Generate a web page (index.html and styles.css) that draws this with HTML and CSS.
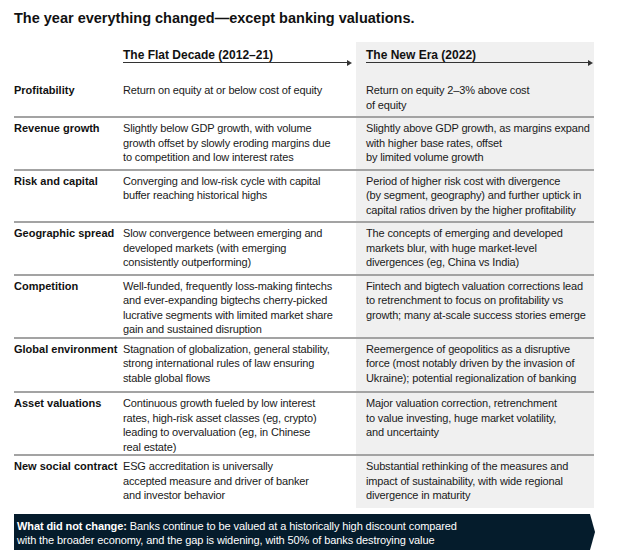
FILE: index.html
```html
<!DOCTYPE html>
<html lang="en">
<head>
<meta charset="utf-8">
<title>The year everything changed</title>
<link rel="stylesheet" href="styles.css">
</head>
<body>
<div class="page">
  <h1 class="title">The year everything changed—except banking valuations.</h1>
  <div class="table">
    <div class="cell head-blank"></div>
    <div class="cell head flat">
      <div class="head-text">The Flat Decade (2012–21)</div>
      <div class="arrow"><span class="arrow-line"></span><svg class="arrow-tip" width="5" height="6" viewBox="0 0 5 6"><path d="M0 0 L5 3 L0 6 Z"/></svg></div>
    </div>
    <div class="cell head new">
      <div class="head-text">The New Era (2022)</div>
      <div class="arrow"><span class="arrow-line"></span><svg class="arrow-tip" width="5" height="6" viewBox="0 0 5 6"><path d="M0 0 L5 3 L0 6 Z"/></svg></div>
    </div>

    <div class="cell label short">Profitability</div>
    <div class="cell flat short">Return on equity at or below cost of equity</div>
    <div class="cell new short">Return on equity 2–3% above cost<br>of equity</div>

    <div class="cell label">Revenue growth</div>
    <div class="cell flat">Slightly below GDP growth, with volume<br>growth offset by slowly eroding margins due<br>to competition and low interest rates</div>
    <div class="cell new">Slightly above GDP growth, as margins expand<br>with higher base rates, offset<br>by limited volume growth</div>

    <div class="cell label">Risk and capital</div>
    <div class="cell flat">Converging and low-risk cycle with capital<br>buffer reaching historical highs</div>
    <div class="cell new">Period of higher risk cost with divergence<br>(by segment, geography) and further uptick in<br>capital ratios driven by the higher profitability</div>

    <div class="cell label">Geographic spread</div>
    <div class="cell flat">Slow convergence between emerging and<br>developed markets (with emerging<br>consistently outperforming)</div>
    <div class="cell new">The concepts of emerging and developed<br>markets blur, with huge market-level<br>divergences (eg, China vs India)</div>

    <div class="cell label">Competition</div>
    <div class="cell flat">Well-funded, frequently loss-making fintechs<br>and ever-expanding bigtechs cherry-picked<br>lucrative segments with limited market share<br>gain and sustained disruption</div>
    <div class="cell new">Fintech and bigtech valuation corrections lead<br>to retrenchment to focus on profitability vs<br>growth; many at-scale success stories emerge</div>

    <div class="cell label roomy">Global environment</div>
    <div class="cell flat roomy">Stagnation of globalization, general stability,<br>strong international rules of law ensuring<br>stable global flows</div>
    <div class="cell new roomy">Reemergence of geopolitics as a disruptive<br>force (most notably driven by the invasion of<br>Ukraine); potential regionalization of banking</div>

    <div class="cell label">Asset valuations</div>
    <div class="cell flat">Continuous growth fueled by low interest<br>rates, high-risk asset classes (eg, crypto)<br>leading to overvaluation (eg, in Chinese<br>real estate)</div>
    <div class="cell new">Major valuation correction, retrenchment<br>to value investing, huge market volatility,<br>and uncertainty</div>

    <div class="cell label last">New social contract</div>
    <div class="cell flat last">ESG accreditation is universally<br>accepted measure and driver of banker<br>and investor behavior</div>
    <div class="cell new last">Substantial rethinking of the measures and<br>impact of sustainability, with wide regional<br>divergence in maturity</div>
  </div>
  <div class="note"><strong>What did not change:</strong> Banks continue to be valued at a historically high discount compared<br>with the broader economy, and the gap is widening, with 50% of banks destroying value</div>
</div>
</body>
</html>
```

FILE: styles.css
```css
*, *::before, *::after {
  box-sizing: border-box;
}

html, body {
  margin: 0;
  padding: 0;
  background: #ffffff;
}

body {
  font-family: "Liberation Sans", Arial, sans-serif;
  color: #1a1a1a;
}

.page {
  padding: 8px 0 0 14px;
  width: 596px;
}

.title {
  margin: 0;
  font-size: 14.5px;
  line-height: 20px;
  font-weight: 700;
  color: #111;
}

.table {
  margin-top: 14px;
  display: grid;
  grid-template-columns: 109px 233px 238px;
  font-size: 11px;
  line-height: 14.5px;
  letter-spacing: -0.15px;
}

.cell {
  padding: 3px 0 0 0;
  border-bottom: 2px solid #a3a3a3;
  min-height: 52.5px;
  white-space: nowrap;
}

.cell.short {
  min-height: 38px;
}

.cell.roomy {
  min-height: 54.5px;
}

.cell.last {
  border-bottom: none;
  min-height: 52px;
}

.label {
  font-weight: 700;
  color: #111;
  letter-spacing: 0;
}

.new {
  background: #f0f0f0;
  padding-left: 10px;
}

.head,
.head-blank {
  border-bottom: none;
  padding: 6px 0 0 0;
  min-height: 38px;
  letter-spacing: 0;
}

.head.new {
  padding-left: 10px;
  padding-right: 1px;
}

.head.flat {
  padding-right: 4px;
}

.head-text {
  font-size: 12px;
  line-height: 14px;
  font-weight: 700;
  color: #111;
}

.arrow {
  display: flex;
  align-items: center;
  height: 1px;
}

.arrow-line {
  flex: 1;
  border-top: 1px solid #333;
}

.arrow-tip {
  display: block;
  fill: #333;
  flex: none;
}

.note {
  margin-top: 6px;
  width: 581px;
  padding: 6px 10px 3px 3px;
  background: #051c2c;
  color: #fff;
  font-size: 11px;
  line-height: 13.5px;
  min-height: 36px;
  letter-spacing: -0.1px;
  clip-path: polygon(0 0, calc(100% - 5px) 0, 100% 50%, calc(100% - 5px) 100%, 0 100%);
}

.note strong {
  font-weight: 700;
}
```
